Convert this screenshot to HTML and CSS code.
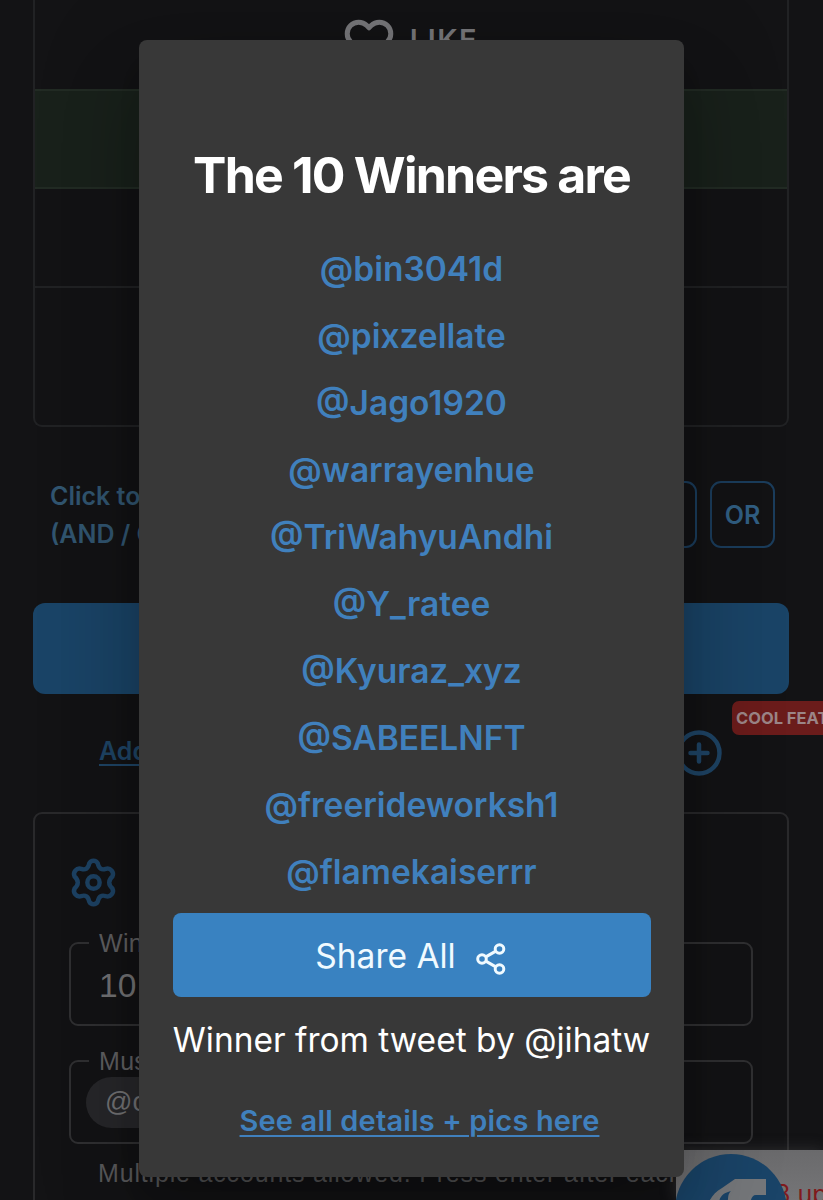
FILE: index.html
```html
<!DOCTYPE html>
<html lang="en">
<head>
    <meta charset="UTF-8">
    <meta name="viewport" content="width=device-width, initial-scale=1.0">
    <title>Twitter Picker</title>
    <link rel="stylesheet" href="styles.css">
</head>
<body>
    <main class="page">
        <div class="table">
            <div class="row row-like">
                <svg class="heart" viewBox="0 0 24 24" fill="none" stroke="currentColor" stroke-width="2.400" stroke-linejoin="round">
                    <path d="M20.84 4.61a5.5 5.5 0 0 0-7.78 0L12 5.67l-1.06-1.06a5.5 5.5 0 0 0-7.78 7.78L12 21.23l8.84-8.84a5.5 5.5 0 0 0 0-7.78z"/>
                </svg>
                <span>LIKE</span>
            </div>
            <div class="row row-green"></div>
            <div class="row"></div>
            <div class="row row-last"></div>
        </div>

        <div class="condition">
            <p>Click to<br>(AND / OR)</p>
            <div class="toggles">
                <button class="toggle toggle-and">AND</button>
                <button class="toggle">OR</button>
            </div>
        </div>

        <button class="pick"></button>

        <div class="add">
            <a class="add-link" href="#">Add</a>
            <svg class="plus" viewBox="0 0 46 46" fill="none" stroke="currentColor" stroke-linecap="round">
                <circle cx="23" cy="23" r="20.500" stroke-width="4.500"/>
                <path d="M23 14.500v17M14.500 23h17" stroke-width="4.500"/>
            </svg>
            <span class="badge">COOL FEAT</span>
        </div>

        <section class="settings">
            <svg class="gear" viewBox="0 0 44 48" fill="none" stroke="currentColor" stroke-width="4.200" stroke-linejoin="round">
                <path d="M18 6a4.500 4.500 0 0 1 8 0c1 5 3.500 6.500 7.500 5.200a5.200 5.200 0 0 1 6.300 7.200c-4 3.500-4 7.700 0 11.200a5.200 5.200 0 0 1-6.300 7.200c-4-1.300-6.500.2-7.500 5.200a4.500 4.500 0 0 1-8 0c-1-5-3.500-6.500-7.500-5.200a5.200 5.200 0 0 1-6.300-7.200c4-3.500 4-7.700 0-11.200a5.200 5.200 0 0 1 6.300-7.200c4 1.300 6.500-.2 7.500-5.200z"/>
                <circle cx="22" cy="24" r="5.800"/>
            </svg>
            <fieldset class="field">
                <legend>Winners</legend>
                <span class="value">10</span>
            </fieldset>
            <fieldset class="field field-chips">
                <legend>Must</legend>
                <span class="chip">@ct</span>
            </fieldset>
            <p class="helper">Multiple accounts allowed. Press enter after each</p>
        </section>
    </main>

    <div class="promo">
        <span class="promo-text">8 up</span>
        <svg class="promo-logo" viewBox="0 0 112 112">
            <circle cx="56" cy="56" r="56" fill="#1a4468"/>
            <path d="M33 50c3-7 7-12 14-16l13-9h31v16H81c-4 0-5 4-6 9z" fill="#75777a"/>
            <path d="M44 50c0-7 4-11 12-13-4 4-2 7-4 13z" fill="#1a4468"/>
        </svg>
    </div>

    <div class="modal">
        <h2>The 10 Winners are</h2>
        <ul class="winners">
            <li><a href="#">@bin3041d</a></li>
            <li><a href="#">@pixzellate</a></li>
            <li><a href="#">@Jago1920</a></li>
            <li><a href="#">@warrayenhue</a></li>
            <li><a href="#">@TriWahyuAndhi</a></li>
            <li><a href="#">@Y_ratee</a></li>
            <li><a href="#">@Kyuraz_xyz</a></li>
            <li><a href="#">@SABEELNFT</a></li>
            <li><a href="#">@freerideworksh1</a></li>
            <li><a href="#">@flamekaiserrr</a></li>
        </ul>
        <button class="share">
            <span>Share All</span>
            <svg class="share-icon" viewBox="0 0 30 32" fill="none" stroke="currentColor" stroke-width="3">
                <circle cx="23.500" cy="6" r="4.300"/>
                <circle cx="6" cy="16" r="4.300"/>
                <circle cx="23.500" cy="26" r="4.300"/>
                <path d="M9.800 13.900l10-5.800M9.800 18.100l10 5.800"/>
            </svg>
        </button>
        <p class="source">Winner from tweet by @jihatw</p>
        <a class="details" href="#">See all details + pics here</a>
    </div>
</body>
</html>
```

FILE: styles.css
```css
* {
    box-sizing: border-box;
}
body {
    position: relative;
    margin: 0;
    height: 1200px;
    overflow: hidden;
    background-color: #131315;
    font-family: Inter, sans-serif;
    color: #666;
}
p, h2, ul {
    margin: 0;
    padding: 0;
}
button {
    font-family: inherit;
    padding: 0;
}
.page {
    height: 1200px;
    padding: 0 34px 0 33px;
    overflow: hidden;
}

/* action table */
.table {
    height: 427px;
    border: 2px solid #212224;
    border-top: none;
    border-radius: 0 0 9px 9px;
}
.row {
    height: 99px;
    border-bottom: 2px solid #212224;
}
.row-like {
    display: flex;
    justify-content: center;
    gap: 16px;
    height: 91px;
    padding-top: 16px;
    border-color: #222b24;
    font-size: 29px;
    font-weight: 600;
    line-height: 48px;
    letter-spacing: 1.500px;
    color: #77777a;
}
.row-green {
    height: 98px;
    background-color: #19211b;
    border-color: #222b24;
}
.row-last {
    border: none;
}
.heart {
    width: 50px;
    height: 50px;
}

/* and / or switch */
.condition {
    display: flex;
    justify-content: space-between;
    margin-top: 50px;
    padding: 0 14px 0 17px;
    font-size: 25px;
    font-weight: 600;
    line-height: 38px;
    color: #315570;
}
.toggles {
    display: flex;
    gap: 13px;
    margin-top: 4px;
}
.toggle {
    width: 65px;
    height: 67px;
    border: 2px solid #1b3d5c;
    border-radius: 11px;
    background: none;
    font-size: 25px;
    font-weight: 600;
    color: #315f83;
}
.toggle-and {
    width: 92px;
}
.pick {
    display: block;
    width: 100%;
    height: 91px;
    margin-top: 50px;
    border: none;
    border-radius: 12px;
    background-color: #1a4467;
}

/* add row */
.add {
    position: relative;
    display: flex;
    justify-content: space-between;
    height: 118px;
    padding: 36px 67px 0 66px;
    color: #1f4566;
}
.add-link {
    font-size: 25px;
    font-weight: 600;
    line-height: 43px;
    color: inherit;
    text-decoration-thickness: 2px;
    text-underline-offset: 4px;
}
.plus {
    width: 46px;
    height: 46px;
}
.badge {
    position: absolute;
    left: 699px;
    top: 7px;
    width: 91px;
    padding-left: 4px;
    border-radius: 7px 0 0 7px;
    background-color: #6b1c1b;
    font-size: 16.500px;
    font-weight: 700;
    line-height: 34px;
    white-space: nowrap;
    color: #9b8587;
}

/* settings card */
.settings {
    height: 420px;
    padding: 43px 34px 0;
    border: 2px solid #29292b;
    border-radius: 9px;
    font-family: "Liberation Sans", Arial, sans-serif;
}
.gear {
    display: block;
    width: 47px;
    height: 51px;
    margin-left: 1px;
    color: #1d4263;
}
.field {
    height: 98px;
    margin: 20px 0 0;
    padding: 0 28px;
    border: 2px solid #303032;
    border-radius: 9px;
}
.field legend {
    margin-left: -10px;
    padding: 0 10px;
    font-size: 25px;
    line-height: 30px;
    letter-spacing: 0.3px;
    color: #5f5f61;
}
.value {
    display: block;
    font-size: 33.500px;
    line-height: 56px;
    color: #727274;
}
.field-chips {
    padding: 0 15px;
}
.field-chips legend {
    margin-left: 3px;
}
.chip {
    display: block;
    width: 150px;
    margin-top: 1px;
    padding-left: 19px;
    border-radius: 26px;
    background-color: #27272a;
    font-size: 27px;
    line-height: 51px;
    color: #727274;
}
.helper {
    margin: 12px 0 0 29px;
    font-size: 25px;
    line-height: 34px;
    letter-spacing: 0.83px;
    white-space: nowrap;
    color: #59595b;
}

/* promo bubble in the corner */
.promo {
    position: absolute;
    left: 676px;
    top: 1150px;
    width: 147px;
    height: 50px;
    overflow: hidden;
    background: linear-gradient(#6a6a6c, #757577);
    box-shadow: 0 0 14px rgba(90, 90, 92, 0.4);
}
.promo-logo {
    position: absolute;
    left: -1px;
    top: 4px;
    width: 112px;
    height: 112px;
}
.promo-text {
    position: absolute;
    left: 99px;
    top: 30px;
    font-size: 25px;
    line-height: 28px;
    white-space: nowrap;
    color: #801a1c;
}

/* winners modal */
.modal {
    position: absolute;
    left: 139px;
    top: 40px;
    display: flex;
    flex-direction: column;
    align-items: center;
    width: 545px;
    height: 1137px;
    padding: 105px 33px 0;
    border-radius: 8px;
    background-color: #383838;
    box-shadow: 0 23px 32px -15px rgba(0, 0, 0, 0.2), 0 50px 80px 6px rgba(0, 0, 0, 0.14), 0 19px 96px 17px rgba(0, 0, 0, 0.12);
    color: #fff;
}
.modal h2 {
    font-size: 50px;
    line-height: 60px;
    letter-spacing: -1.780px;
    white-space: nowrap;
}
.winners {
    margin-top: 31px;
    list-style: none;
    text-align: center;
}
.winners li {
    height: 67px;
    font-size: 33.500px;
    font-weight: 600;
    line-height: 67px;
}
.winners a,
.details {
    color: #4080bd;
}
.winners a {
    text-decoration: none;
}
.share {
    display: flex;
    justify-content: center;
    align-items: center;
    gap: 20px;
    flex: none;
    width: 478px;
    height: 84px;
    margin-top: 7px;
    padding-right: 2px;
    border: none;
    border-radius: 8px;
    background-color: #3982c1;
    font-size: 33.500px;
    color: #f0faff;
}
.share span {
    margin-top: 2px;
}
.share-icon {
    width: 30px;
    height: 32px;
    margin-top: 8px;
}
.source {
    margin-top: 18px;
    font-size: 33.500px;
    line-height: 50px;
    white-space: nowrap;
}
.details {
    margin: 34px 0 0 16px;
    font-size: 29px;
    font-weight: 600;
    line-height: 44px;
    letter-spacing: 0.15px;
    white-space: nowrap;
    text-decoration-thickness: 2px;
    text-underline-offset: 4px;
}
```
